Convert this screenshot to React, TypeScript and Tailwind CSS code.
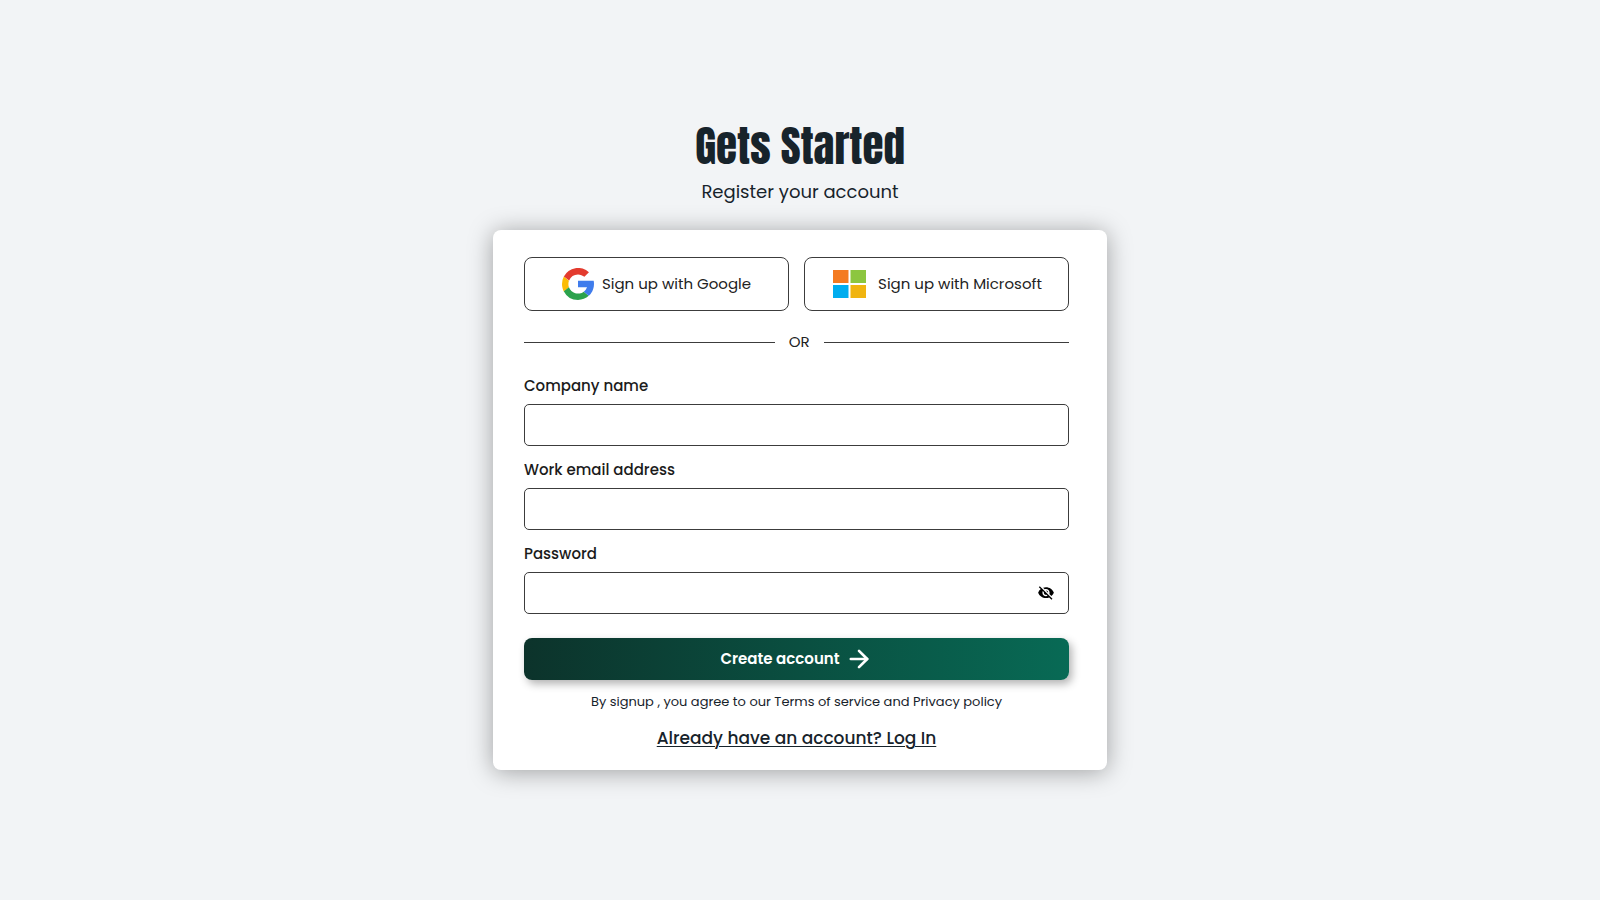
import React, { useState } from 'react';
import { ArrowRight } from 'lucide-react';
import { IoMdEye, IoMdEyeOff } from 'react-icons/io';

interface FieldProps {
  id: string;
  label: string;
  type: string;
  children?: React.ReactNode;
}

const GoogleLogo: React.FC = () => (
  <svg className="h-8 w-8 shrink-0" viewBox="4 4 40 40" aria-hidden="true">
    <path fill="#fbbc04" d="M12 24c0-1.4.25-2.8.7-4.1L6.3 14.7A20 20 0 0 0 4 24c0 3.3.8 6.5 2.3 9.3l6.4-5.2A12 12 0 0 1 12 24z" />
    <path fill="#e33b2e" d="M24 12c3 0 5.8 1.1 8 3l5.7-5.7A20 20 0 0 0 6.3 14.7l6.6 4.8A12 12 0 0 1 24 12z" />
    <path fill="#2ba24c" d="M24 44c5.2 0 9.9-2 13.4-5.2l-6.2-5.2A12 12 0 0 1 12.7 28l-6.5 5A20 20 0 0 0 24 44z" />
    <path fill="#3f7cec" d="M43.6 20H24v8h11.3a12 12 0 0 1-4.1 5.6l6.2 5.2C37 39.2 44 34 44 24c0-1.3-.1-2.7-.4-4z" />
  </svg>
);

const MicrosoftLogo: React.FC = () => (
  <svg className="h-7 w-[33px] shrink-0" viewBox="0 0 33 28" aria-hidden="true">
    <path fill="#f47a20" d="M0 0h15.5v13H0z" />
    <path fill="#8cc63f" d="M17.5 0H33v13H17.5z" />
    <path fill="#00adef" d="M0 15h15.5v13H0z" />
    <path fill="#f0b410" d="M17.5 15H33v13H17.5z" />
  </svg>
);

const Field: React.FC<FieldProps> = ({ id, label, type, children }) => (
  <div className="flex flex-col gap-1.5">
    <label htmlFor={id} className="text-[15px] leading-6 font-medium text-[#1b1b1b]">
      {label}
    </label>
    <div className="flex h-[42px] items-center rounded-[5px] border border-[#3c3c3c]">
      <input id={id} type={type} className="h-full min-w-0 flex-1 rounded-[5px] px-3 outline-none" />
      {children}
    </div>
  </div>
);

const App: React.FC = () => {
  const [showPassword, setShowPassword] = useState(false);

  return (
    <main className="flex min-h-screen flex-col items-center justify-center bg-[#f2f4f6] px-4 pb-2 font-['Poppins','Inter',sans-serif] text-[#17232b]">
      <h1 className="font-['Anton','Liberation_Sans_Narrow',sans-serif] text-[43px] leading-[48px] font-normal">
        Gets Started
      </h1>
      <p className="mt-2 text-lg leading-7">Register your account</p>

      <form
        className="mt-6 w-full max-w-[614px] rounded-lg bg-white pt-[27px] pr-[38px] pb-[18px] pl-[31px] shadow-[0_2px_24px_rgba(0,0,0,0.35)]"
        onSubmit={(e) => e.preventDefault()}
      >
        <div className="grid grid-cols-2 gap-[15px] text-[15px] text-[#222222]">
          <button type="button" className="flex h-[54px] items-center justify-center gap-2 rounded-lg border border-[#3c3c3c]">
            <GoogleLogo />
            Sign up with Google
          </button>
          <button type="button" className="flex h-[54px] items-center justify-center gap-3 rounded-lg border border-[#3c3c3c] pl-0.5">
            <MicrosoftLogo />
            Sign up with Microsoft
          </button>
        </div>

        {/* Divider */}
        <div className="mt-[19px] flex items-center gap-3.5 text-[15px] leading-6 text-[#222222]">
          <div className="h-px w-[46%] bg-[#3c3c3c]"></div>
          <span>OR</span>
          <div className="h-px flex-1 bg-[#3c3c3c]"></div>
        </div>

        <div className="mt-5 flex flex-col gap-3">
          <Field id="company" label="Company name" type="text" />
          <Field id="email" label="Work email address" type="email" />
          <Field id="password" label="Password" type={showPassword ? 'text' : 'password'}>
            <button
              type="button"
              aria-label="Toggle password visibility"
              className="mr-[13px] text-black"
              onClick={() => setShowPassword(!showPassword)}
            >
              {showPassword ? <IoMdEye size={18} /> : <IoMdEyeOff size={18} />}
            </button>
          </Field>
        </div>

        <button
          type="submit"
          className="mt-6 flex h-[42px] w-full items-center justify-center gap-[5px] rounded-lg bg-linear-to-r/srgb from-[#0c332b] to-[#086a55] text-[15px] font-semibold text-white shadow-[3px_4px_8px_rgba(0,0,0,0.3)]"
        >
          Create account
          <ArrowRight size={28} strokeWidth={2.3} />
        </button>

        <p className="mt-2.5 text-center text-[13px] leading-6">
          By signup , you agree to our Terms of service and Privacy policy
        </p>
        <p className="mt-2.5 text-center text-[17px] leading-7 font-medium">
          <a href="#login" className="underline decoration-1 underline-offset-2">
            Already have an account? Log In
          </a>
        </p>
      </form>
    </main>
  );
};

export default App;
